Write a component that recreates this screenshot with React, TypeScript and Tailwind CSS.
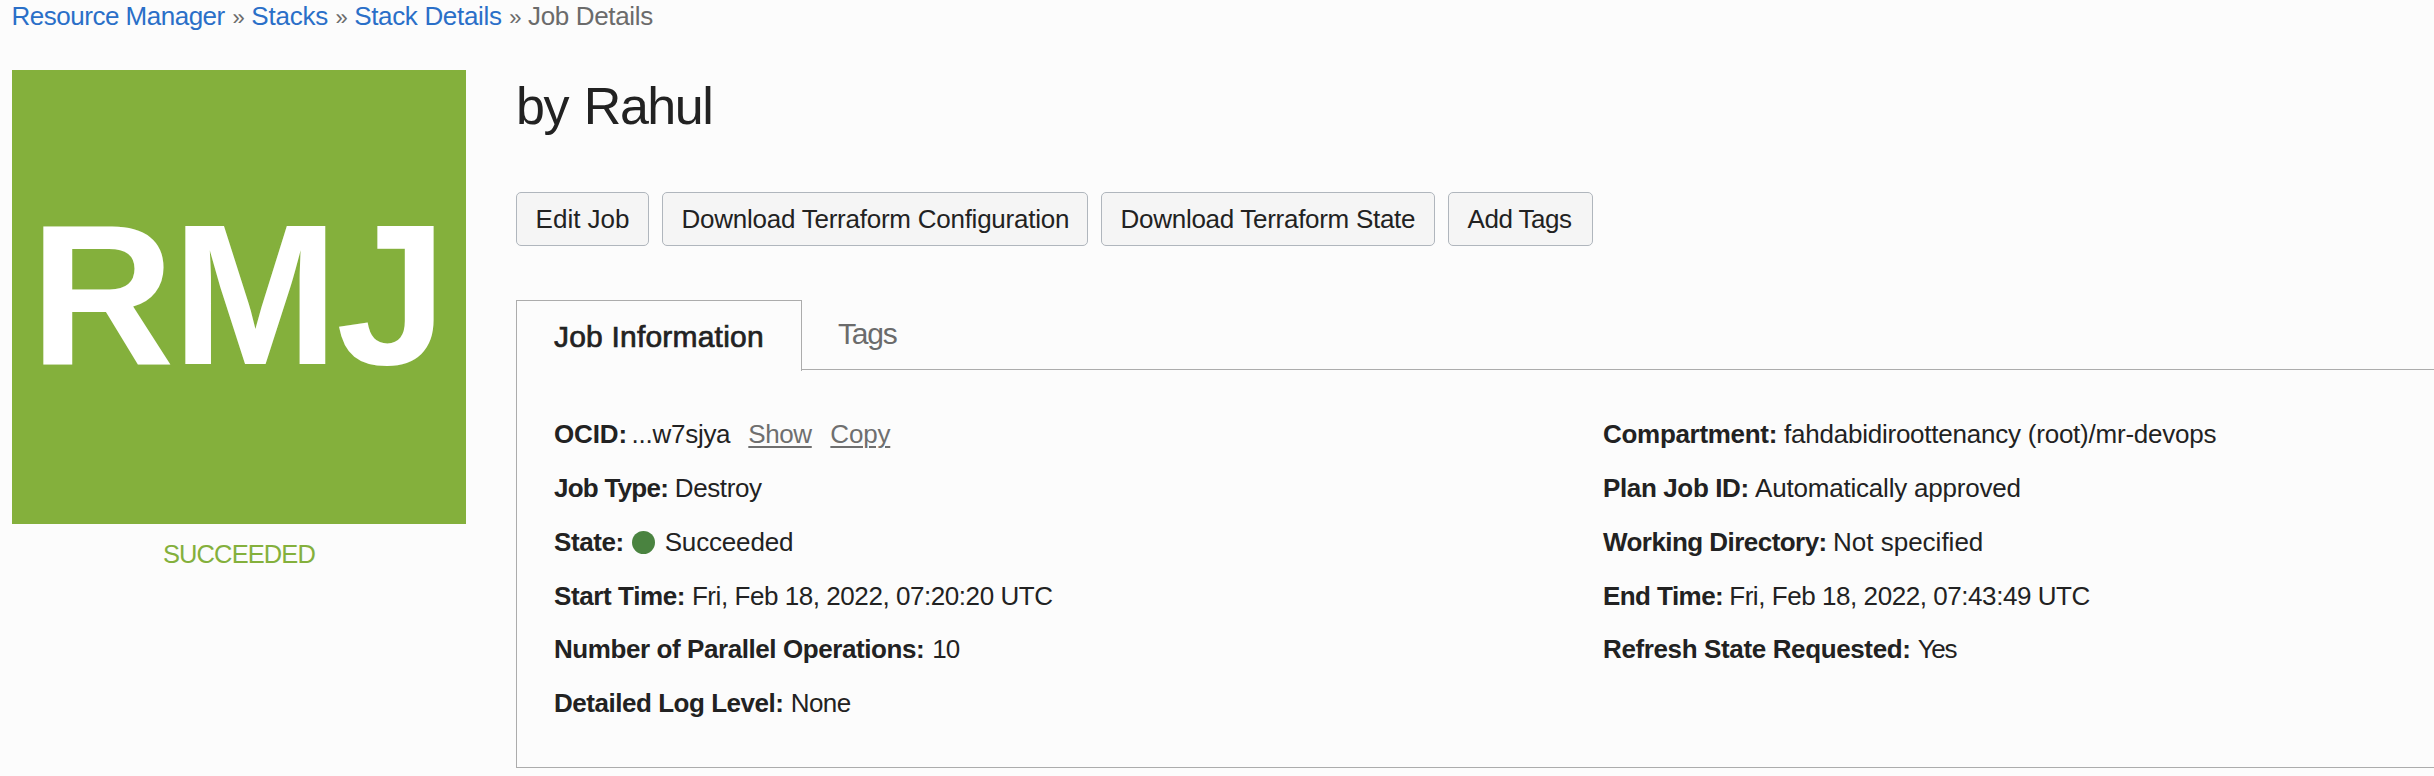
import type { ReactNode } from "react";

type Crumb = { label: string; className: string; current?: boolean };

const crumbs: Crumb[] = [
  { label: "Resource Manager", className: "w-[221px] tracking-[-0.5px]" },
  { label: "Stacks", className: "w-[84.2px] tracking-[-0.2px]" },
  { label: "Stack Details", className: "w-[155.2px] tracking-[-0.33px]" },
  { label: "Job Details", className: "tracking-[-0.35px]", current: true },
];

const actions = [
  { label: "Edit Job", className: "w-[133px]" },
  { label: "Download Terraform Configuration", className: "w-[426px] tracking-[-0.25px]" },
  { label: "Download Terraform State", className: "w-[334px] tracking-[-0.29px]" },
  { label: "Add Tags", className: "w-[145px] tracking-[-0.5px]" },
];

function Field({ label, labelClass, valueClass = "", children }: {
  label: string;
  labelClass: string;
  valueClass?: string;
  children: ReactNode;
}) {
  return (
    <div className="flex items-start whitespace-nowrap leading-[54px]">
      <dt className={`shrink-0 font-bold ${labelClass}`}>{label}</dt>
      <dd className={`flex ${valueClass}`}>{children}</dd>
    </div>
  );
}

function Breadcrumbs() {
  return (
    <nav className="flex pt-px pl-[11.6px] leading-[30px] whitespace-nowrap text-[#6b6b6b]">
      {crumbs.map((c) => (
        <span key={c.label} className="flex items-baseline">
          {c.current ? (
            <span className={c.className}>{c.label}</span>
          ) : (
            <>
              <a className={`block text-[#2a6fc8] ${c.className}`}>{c.label}</a>
              <span className="block w-[18.7px] text-[22px] leading-none">»</span>
            </>
          )}
        </span>
      ))}
    </nav>
  );
}

export default function App() {
  return (
    <div className="h-[776px] w-full overflow-hidden bg-[#fcfcfc] font-['Liberation_Sans',Arial,sans-serif] text-[26px] text-[#222222]">
      <Breadcrumbs />

      <div className="flex pt-[39px] pl-3">
        <aside className="w-[454px] shrink-0">
          <div className="h-[454px] bg-[#84b03c] pt-[113px] pl-[18px] text-[200px] leading-[223px] font-bold tracking-[-2.5px] text-white">
            RMJ
          </div>
          <p className="mt-[15px] text-center text-[25.5px] leading-[30px] tracking-[-0.9px] text-[#84b03c]">
            SUCCEEDED
          </p>
        </aside>

        <main className="ml-[50px] grow">
          <h1 className="pt-[7px] text-[52px] leading-[58px] tracking-[-1.5px] [word-spacing:3px]">by Rahul</h1>

          <div className="mt-[57px] flex gap-[13px]">
            {actions.map((a) => (
              <button
                key={a.label}
                className={`h-[54px] rounded-[5px] border border-[#b0b6bd] bg-[#f5f5f5] pl-[18.6px] text-left leading-[52px] whitespace-nowrap ${a.className}`}
              >
                {a.label}
              </button>
            ))}
          </div>

          <div className="mt-[54px] flex h-[69px]">
            <div className="z-10 h-[71px] w-[286px] border-x border-t border-[#acacac] bg-[#fcfcfc] pt-[19px] pl-[37px] text-[30px] leading-[33px] tracking-[0.2px] [-webkit-text-stroke:0.7px_#222222]">
              Job Information
            </div>
            <div className="pt-[17px] pl-9 text-[30px] leading-[33px] tracking-[-1.2px] text-[#6b6b6b]">
              Tags
            </div>
          </div>

          <section className="flex h-[399px] border-y border-l border-[#acacac] pt-[37px] pl-[37px]">
            <dl className="grid w-[1049px] shrink-0 grid-rows-[54px_54px_54px_53px_54px_54px]">
              <Field label="OCID:" labelClass="w-[77.6px] tracking-[-0.15px]" valueClass="tracking-[-0.27px]">
                ...w7sjya
                <a className="ml-[18px] tracking-[-0.4px] text-[#6f6f6f] underline decoration-2 underline-offset-[3px]">Show</a>
                <a className="ml-[18.6px] tracking-[-0.2px] text-[#6f6f6f] underline decoration-2 underline-offset-[3px]">Copy</a>
              </Field>
              <Field label="Job Type:" labelClass="w-[120.8px] tracking-[-0.75px]" valueClass="tracking-[-0.4px]">
                Destroy
              </Field>
              <Field label="State:" labelClass="w-[78px] tracking-[-0.4px]" valueClass="tracking-[-0.17px]">
                <span className="mt-4 mr-[9.7px] size-[23px] rounded-full bg-[#4a8340]" />
                Succeeded
              </Field>
              <Field label="Start Time:" labelClass="w-[137.9px] tracking-[-0.39px]" valueClass="tracking-[-0.44px]">
                Fri, Feb 18, 2022, 07:20:20 UTC
              </Field>
              <Field label="Number of Parallel Operations:" labelClass="w-[378.2px] tracking-[-0.42px]" valueClass="tracking-[-1px]">
                10
              </Field>
              <Field label="Detailed Log Level:" labelClass="w-[236.8px] tracking-[-0.47px]" valueClass="tracking-[-0.6px]">
                None
              </Field>
            </dl>
            <dl className="grid grid-rows-[54px_54px_54px_53px_54px_54px]">
              <Field label="Compartment:" labelClass="w-[181px] tracking-[-0.3px]" valueClass="tracking-[-0.23px]">
                fahdabidiroottenancy (root)/mr-devops
              </Field>
              <Field label="Plan Job ID:" labelClass="w-[152px] tracking-[-0.37px]" valueClass="tracking-[-0.2px]">
                Automatically approved
              </Field>
              <Field label="Working Directory:" labelClass="w-[230px] tracking-[-0.55px]">
                Not specified
              </Field>
              <Field label="End Time:" labelClass="w-[126.2px] tracking-[-0.56px]" valueClass="tracking-[-0.44px]">
                Fri, Feb 18, 2022, 07:43:49 UTC
              </Field>
              <Field label="Refresh State Requested:" labelClass="w-[314.8px] tracking-[-0.37px]" valueClass="tracking-[-1.4px]">
                Yes
              </Field>
            </dl>
          </section>
        </main>
      </div>
    </div>
  );
}
